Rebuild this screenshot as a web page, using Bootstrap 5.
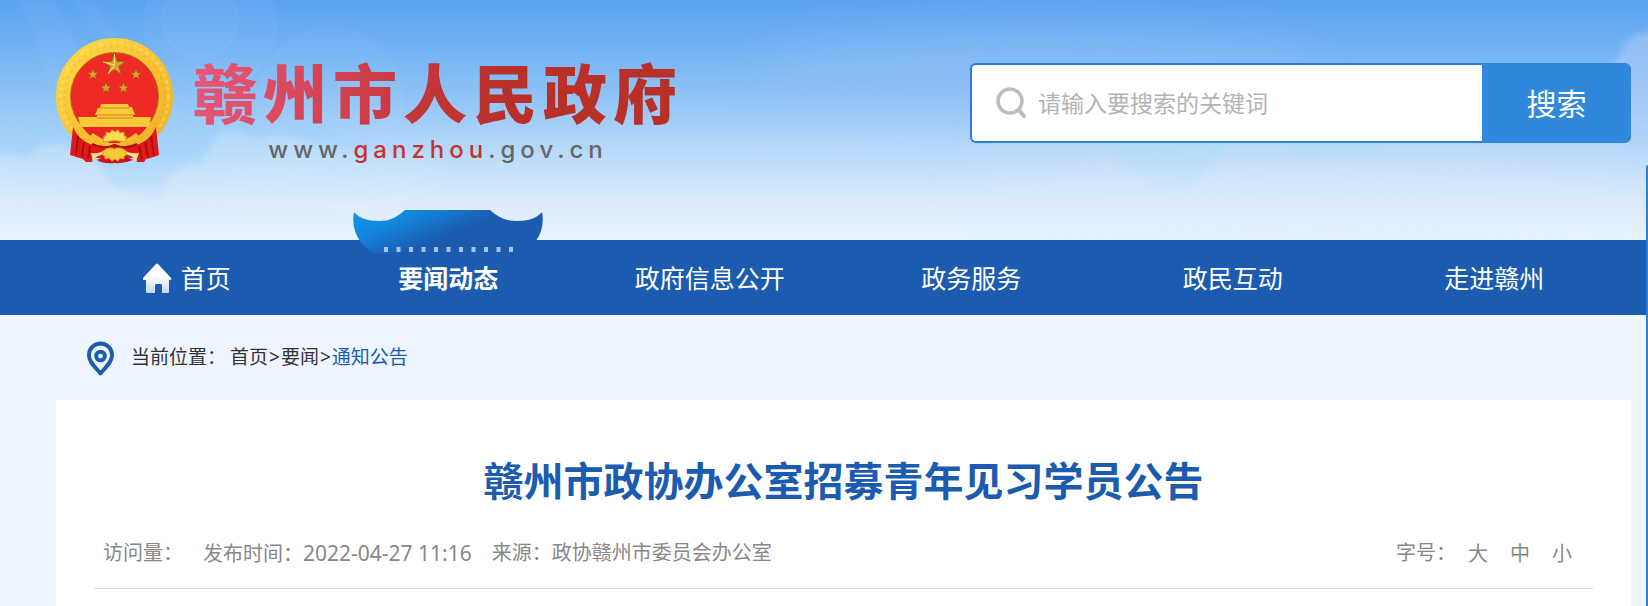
<!DOCTYPE html>
<html lang="zh-CN">
<head>
<meta charset="utf-8">
<meta name="viewport" content="width=device-width, initial-scale=1">
<title>赣州市人民政府</title>
<link href="https://cdn.jsdelivr.net/npm/bootstrap@5.3.0/dist/css/bootstrap.min.css" rel="stylesheet">
<style>
  :root { --gov-blue: #1b5cb0; --gov-light: #eef5ff; }
  body { background: var(--gov-light); font-family: "Noto Sans", "Noto Sans CJK SC", sans-serif; color: #333; min-height: 100vh; }
  a { text-decoration: none; }
  .page-gutter { padding-left: 56px; padding-right: 17px; }
  .hero { background: linear-gradient(#5ba4f2 0%, #74b3f4 22%, #98c8f7 45%, #c0defa 68%, #dcecfc 85%, #e6f3fe 100%); padding-top: 38px; height: 240px; }
  .hero-sky { inset: 0; width: 100%; height: 100%; }
  .brand-name { font-size: 64px; line-height: 64px; padding: 20px 0 8px 20px; font-weight: 900; letter-spacing: 6px; font-family: "Noto Sans CJK SC", sans-serif;
    background: linear-gradient(100deg, #ee5a80 0%, #d9475a 26%, #c4363a 48%, #b93028 66%, #b93028 100%); -webkit-background-clip: text; background-clip: text; color: transparent; }
  .brand-url { font: 500 24px/24px Inter, sans-serif; letter-spacing: 5px; color: #666; padding: 8px 0 0 20px; }
  .brand-url b { font-weight: 500; color: #c23434; }
  .search-box { width: 661px; height: 80px; margin-top: 25px; }
  .search-field { background: #fff; border: 2px solid #2f7bd8; border-right: 0; border-radius: 6px 0 0 6px; padding-left: 24px; }
  .search-field input { border: 0; outline: 0; font-size: 23px; padding: 0; background: transparent; }
  .search-field input::placeholder { color: #b3b3b3; opacity: 1; }
  .search-go { width: 149px; border: 0; border-radius: 0 6px 6px 0; background: #2f88dc; color: #fff; font-size: 30px; }
  .main-nav { background: var(--gov-blue); height: 75px; padding-left: 56px; padding-right: 23px; }
  .main-nav a { color: #fff; font-size: 25px; padding-top: 2px; }
  .nav-roof { width: 190px; height: 44px; top: -30px; left: 50%; transform: translateX(-50%); }
  .crumbs { height: 85px; font-size: 19px; padding-left: 86px; }
  .crumbs a { color: #333; }
  .crumbs a.here { color: var(--gov-blue); }
  .crumbs i { font-style: normal; margin: 0 1px; }
  .article { background: #fff; padding: 54px 38px 40px; }
  .article h1 { font-size: 40px; line-height: 54px; font-weight: 700; color: var(--gov-blue); margin-bottom: 30px; }
  .meta-row { border-bottom: 1px solid #dcdcdc; font-size: 20px; line-height: 30px; color: #888; padding: 0 21px 19px 9px; }
  .meta-row time { font-size: 21px; }
  .meta-row button { border: 0; background: none; padding: 0; color: #888; }
  .meta-list { column-gap: 20px; }
  .size-list { column-gap: 22px; }
  .size-label { margin-right: 12px; }
  .side-edge { right: 0; top: 165px; bottom: 0; width: 2px; background: #2f7edb; border-top-left-radius: 2px; }
</style>
</head>
<body class="position-relative">
<header>
  <div class="hero page-gutter position-relative">
    <svg class="hero-sky position-absolute" viewBox="0 0 1648 240" preserveAspectRatio="none" aria-hidden="true">
      <defs>
        <filter id="soft" x="-40%" y="-80%" width="180%" height="260%"><feGaussianBlur stdDeviation="22"/></filter>
        <filter id="edge" x="-10%" y="-10%" width="120%" height="120%"><feGaussianBlur stdDeviation="3"/></filter>
        <linearGradient id="puff" gradientUnits="userSpaceOnUse" x1="0" y1="128" x2="0" y2="225"><stop offset="0" stop-color="#fff" stop-opacity=".16"/><stop offset=".45" stop-color="#fff" stop-opacity=".26"/><stop offset="1" stop-color="#fff" stop-opacity="0"/></linearGradient>
        <linearGradient id="puffFade" x1="0" y1="0" x2="1" y2="0"><stop offset="0" stop-color="#fff"/><stop offset=".6" stop-color="#fff"/><stop offset="1" stop-color="#000"/></linearGradient>
        <mask id="fadeRight"><rect y="100" width="480" height="140" fill="url(#puffFade)"/></mask>
        <linearGradient id="gap" gradientUnits="userSpaceOnUse" x1="0" y1="135" x2="0" y2="205"><stop offset="0" stop-color="#a9dbf7" stop-opacity=".75"/><stop offset="1" stop-color="#bfe0f8" stop-opacity="0"/></linearGradient>
      </defs>
      <ellipse cx="120" cy="150" rx="260" ry="30" fill="#8bcbfb" opacity=".4" filter="url(#soft)"/>
      <ellipse cx="1040" cy="70" rx="280" ry="40" fill="#9bc0f4" opacity=".35" filter="url(#soft)"/>
      <ellipse cx="1300" cy="190" rx="330" ry="25" fill="#dde8fc" opacity=".5" filter="url(#soft)"/>
      <g mask="url(#fadeRight)"><path d="M-10 154 Q8 151 16 156 Q26 160 32 154 Q38 144 55 144 Q76 142 83 154 Q102 162 106 176 Q110 188 124 190 Q140 200 160 198 Q166 188 165 178 Q178 166 202 162 Q210 150 216 136 Q228 126 244 132 Q256 142 275 135 Q310 140 340 150 Q400 150 480 170 V240 H-10Z" fill="url(#puff)" filter="url(#edge)"/></g>
      <path d="M1108 135H1245Q1222 142 1217 158 Q1200 170 1198 184 L1150 194 Q1148 178 1136 172 Q1118 164 1118 152Z" fill="url(#gap)" filter="url(#edge)"/>
      <path d="M1275 135H1380V155Q1350 138 1330 154 Q1312 152 1302 159Q1290 152 1288 144Z" fill="url(#gap)" filter="url(#edge)"/>
      <path d="M1660 28 Q1632 34 1624 44 Q1624 56 1612 62 Q1620 80 1631 150 H1660Z" fill="#b7cff6" opacity=".5" filter="url(#edge)"/>
      <g fill="#fff" fill-opacity=".03" stroke="#fff" stroke-opacity=".03" stroke-width="2"><circle cx="200" cy="20" r="38"/><circle cx="210" cy="25" r="66"/><circle cx="330" cy="100" r="72"/></g>
      <path d="M20 0 60 110 110 110 55 0ZM75 0 100 40 125 40 90 0Z" fill="#fff" opacity=".03" filter="url(#edge)"/>
    </svg>
    <div class="position-relative d-flex justify-content-between align-items-start">
      <a href="#" class="d-flex" aria-label="赣州市人民政府">
        <svg width="117" height="126" viewBox="0 0 117 126" aria-hidden="true">
          <defs>
            <linearGradient id="gold" x1="0" y1="0" x2="1" y2="1"><stop offset="0" stop-color="#ffd944"/><stop offset=".5" stop-color="#f9c332"/><stop offset="1" stop-color="#f1b026"/></linearGradient>
            <path id="star" d="M0-10 2.4-3.2 9.5-3.1 3.8 1.2 5.9 8.1 0 4-5.9 8.1-3.8 1.2-9.5-3.1-2.4-3.2Z"/>
          </defs>
          <circle cx="58.500" cy="58.500" r="51" fill="none" stroke="url(#gold)" stroke-width="15"/>
          <circle cx="58.500" cy="58.500" r="54" fill="none" stroke="#ffe270" stroke-width="3" stroke-dasharray="4 3" opacity=".5"/>
          <circle cx="58.500" cy="58.500" r="50" fill="none" stroke="#e59e18" stroke-width="2" stroke-dasharray="2 5" opacity=".35"/>
          <circle cx="58.500" cy="58.500" r="44" fill="#ee2a24" stroke="#a87318" stroke-width="1"/>
          <g fill="#dba52c" stroke="#8d5a12" stroke-width=".6">
            <use href="#star" transform="translate(58.500 27) scale(1.150)"/>
            <use href="#star" transform="translate(37 36.500) scale(.55)"/>
            <use href="#star" transform="translate(80 36.500) scale(.55)"/>
            <use href="#star" transform="translate(50 50) scale(.55)"/>
            <use href="#star" transform="translate(67.500 50) scale(.55)"/>
          </g>
          <path d="M58.500 16V27L47 24M58.500 27 52 36" stroke="#ffe27a" stroke-width="1" fill="none"/>
          <path d="M45 66H72L73 69H76L79 77H77V80L83 88H34L41 80V77H39L42 70H44Z" fill="#fdc93a"/>
          <path d="M22 79H95L93 89H25Z" fill="#fbc838"/>
          <path d="M44 70H74M40 77H78M41 80H77" stroke="#c98a1c" stroke-width="1"/>
          <path d="M26 89H91Q80 103 69 105H48Q36 102 26 89Z" fill="#ea2420"/>
          <path d="M17 89 Q22 101 34 106 Q46 110 58.500 107 Q71 110 83 106 Q95 101 100 89 L103 117 Q95 120 90 121 L88 124 81 124 80 120 H37 L36 124 30 124 27 121 Q20 119 14 117Z" fill="#df1a18"/>
          <path d="M22 98 20 117M28 104 26 119M34 108 32 121M95 98 98 117M89 104 92 119M83 108 86 121" stroke="#a90d0d" stroke-width="2" fill="none"/>
          <path d="M36 106 Q48 112 58.500 107 Q69 112 81 106" fill="none" stroke="#b30e0e" stroke-width="2"/>
          <path d="M37 95 Q45 101 52 103 L54 107 Q44 106 34 98ZM80 95 Q72 101 65 103 L63 107 Q73 106 83 98Z" fill="#f6bf33"/>
          <path d="M47 104 48 98 50 98 50 94 54 95 56 92 59 94 62 92 64 95 68 94 68 98 70 98 70 104 Q58.500 101 47 104Z" fill="#fddc50" stroke="#d79a1e"/>
          <path d="M41 122 49 118 H68 L77 122 Q68 126 58.500 125 Q47 126 41 122Z" fill="#c91515"/>
          <path d="M35 115 Q44 116 48 112 L50 116 Q40 117 37 123ZM83 115 Q73 116 69 112 L67 116 Q77 117 80 123Z" fill="#fbe08a"/>
          <path d="M47 113 Q53 108 58.500 111 Q64 108 70 113 L70 117 68 118 68 121 64 120 62 123 59 121 56 123 53 120 49 121 49 118 47 117Z" fill="#f8c936" stroke="#dca024" stroke-width="1"/>
        </svg>
        <span class="d-flex flex-column">
          <span class="brand-name">赣州市人民政府</span>
          <span class="brand-url text-center">www.<b>ganzhou</b>.gov.cn</span>
        </span>
      </a>
      <form class="search-box d-flex" role="search">
        <div class="search-field d-flex align-items-center flex-grow-1">
          <svg class="me-2" width="34" height="34" viewBox="0 0 34 34" fill="none" stroke="#bdbdbd" stroke-linecap="round" aria-hidden="true"><circle cx="14" cy="15" r="12" stroke-width="3.500"/><path d="M23 24 28 30" stroke-width="4"/></svg>
          <input class="flex-grow-1" type="text" placeholder="请输入要搜索的关键词" aria-label="搜索关键词">
        </div>
        <button class="search-go" type="submit">搜索</button>
      </form>
    </div>
  </div>
  <nav class="main-nav d-flex align-items-stretch position-relative">
    <div class="row g-0 flex-grow-1 text-center">
      <a href="#" class="col d-flex align-items-center justify-content-center">
        <svg class="me-2" width="30" height="34" viewBox="0 0 30 34" aria-hidden="true"><defs><linearGradient id="hm" x1="0" y1="0" x2="0" y2="1"><stop offset=".4" stop-color="#fff"/><stop offset="1" stop-color="#c9d8ee"/></linearGradient></defs><path d="M13 2Q14 1 15 2L28 16Q29 18 27 18H26V30Q26 31 25 31H19V24Q19 22 18 22H13Q12 22 12 24V31H4Q3 31 3 30V18H1Q-1 18 0 16Z" fill="url(#hm)"/></svg>首页</a>
      <a href="#" class="col d-flex align-items-center justify-content-center position-relative fw-bold" aria-current="page">
        <svg class="nav-roof position-absolute" viewBox="0 0 190 44" aria-hidden="true">
          <defs><linearGradient id="roof" gradientUnits="userSpaceOnUse" x1="38" y1="-26" x2="64" y2="38"><stop offset="0" stop-color="#109af2"/><stop offset=".5" stop-color="#1288e0"/><stop offset="1" stop-color="#1b5cb0"/></linearGradient></defs>
          <path d="M1 2C6 8 14 11 26 11C39 11 45 6 52 0H137C144 6 151 11 164 11C176 11 184 8 189 2Q192 18 183 31Q178 39 168 44H22Q12 39 7 31Q-2 18 1 2Z" fill="url(#roof)"/>
          <path d="M31 39.500H165" stroke="#a9c0e2" stroke-width="5" stroke-dasharray="4 8.500"/>
        </svg>要闻动态</a>
      <a href="#" class="col d-flex align-items-center justify-content-center">政府信息公开</a>
      <a href="#" class="col d-flex align-items-center justify-content-center">政务服务</a>
      <a href="#" class="col d-flex align-items-center justify-content-center">政民互动</a>
      <a href="#" class="col d-flex align-items-center justify-content-center">走进赣州</a>
    </div>
  </nav>
</header>
<div class="crumbs d-flex align-items-center">
  <svg class="me-3" width="29" height="36" viewBox="0 0 30 36" fill="none" stroke="#1b5cb0" aria-hidden="true"><path d="M15 34C9 27 3 22 3 15A12 12 0 0 1 27 15C27 22 21 27 15 34Z" stroke-width="4" stroke-linejoin="round"/><circle cx="15" cy="16" r="4.500" stroke-width="4"/></svg>
  <span class="me-1">当前位置：</span>
  <span><a href="#">首页</a><i>&gt;</i><a href="#">要闻</a><i>&gt;</i><a href="#" class="here">通知公告</a></span>
</div>
<main class="page-gutter">
  <article class="article">
    <h1 class="text-center">赣州市政协办公室招募青年见习学员公告</h1>
    <div class="meta-row d-flex justify-content-between">
      <div class="d-flex meta-list">
        <span>访问量：</span>
        <span>发布时间：<time datetime="2022-04-27T11:16">2022-04-27 11:16</time></span>
        <span>来源：政协赣州市委员会办公室</span>
      </div>
      <div class="d-flex"><span class="size-label">字号：</span><span class="d-flex size-list"><button type="button">大</button><button type="button">中</button><button type="button">小</button></span></div>
    </div>
  </article>
</main>
<div class="side-edge position-absolute"></div>
<script src="https://cdn.jsdelivr.net/npm/bootstrap@5.3.0/dist/js/bootstrap.bundle.min.js"></script>
</body>
</html>
